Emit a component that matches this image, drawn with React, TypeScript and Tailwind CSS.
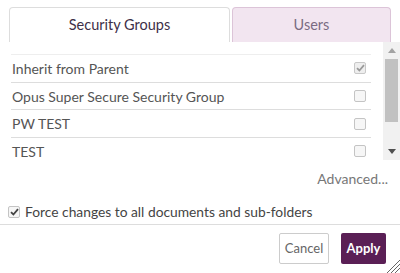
import React from "react";

const rows = [
  { label: "Inherit from Parent", checked: true, disabled: true },
  { label: "Opus Super Secure Security Group", checked: false },
  { label: "PW TEST", checked: false },
  { label: "TEST", checked: false },
];

function Box({ checked, disabled }: { checked?: boolean; disabled?: boolean }) {
  return (
    <span
      className={
        "w-[12px] h-[12px] rounded-[2px] border flex items-center justify-center " +
        (disabled ? "border-[#c8c8c8] bg-[#eeeeee]" : "border-[#c4c4c4] bg-[#f6f6f6]")
      }
    >
      {checked && (
        <svg width="9" height="8" viewBox="0 0 9 8">
          <path
            d="M1 4.2 L3.4 6.5 L8 1.2"
            fill="none"
            stroke={disabled ? "#9a9a9a" : "#444"}
            strokeWidth="1.8"
          />
        </svg>
      )}
    </span>
  );
}

export default function App() {
  return (
    <div
      className="w-[400px] h-[273px] bg-white relative overflow-hidden text-[14px]"
      style={{ fontFamily: "Lato, 'Open Sans', sans-serif" }}
    >
      <div className="flex pt-[7px] pl-[9px] h-[42px]">
        <div className="w-[221px] h-[35px] border border-b-0 border-[#dddddd] rounded-t-[4px] bg-white flex items-center justify-center text-[14.5px] text-[#3d2f48]">
          Security Groups
        </div>
        <div className="ml-[2px] w-[159px] h-[35px] border border-b-0 border-[#dcc4d8] rounded-t-[4px] bg-[#f2e5f0] flex items-center justify-center text-[14.5px] text-[#7a6b82]">
          Users
        </div>
      </div>
      <div className="flex h-[118px]">
        <div className="flex-1 pt-[12px] pl-[11px] pr-[12px] overflow-hidden">
          <div className="border-t border-[#eeeeee]">
            {rows.map((r) => (
              <div
                key={r.label}
                className="h-[27.7px] border-b border-[#dddddd] flex items-center justify-between pl-[1px] pr-[5px] text-[#555555]"
              >
                <span>{r.label}</span>
                <Box checked={r.checked} disabled={r.disabled} />
              </div>
            ))}
          </div>
        </div>
        <div className="w-[17px] bg-[#f1f1f1] flex flex-col items-center">
          <div className="h-[17px] flex items-center justify-center">
            <svg width="8" height="5" viewBox="0 0 8 5">
              <path d="M0 5 L4 0 L8 5 Z" fill="#a3a3a3" />
            </svg>
          </div>
          <div className="w-[13px] h-[63px] bg-[#c1c1c1]" />
          <div className="flex-1" />
          <div className="h-[17px] flex items-center justify-center">
            <svg width="8" height="5" viewBox="0 0 8 5">
              <path d="M0 0 L8 0 L4 5 Z" fill="#505050" />
            </svg>
          </div>
        </div>
      </div>
      <div className="flex justify-end pr-[12px] pt-[8px] h-[40px] text-[#777777]">Advanced...</div>
      <div className="flex items-center pl-[8px] h-[24px] text-[#444444] gap-[5px]">
        <Box checked />
        <span className="text-[13.8px]">Force changes to all documents and sub-folders</span>
      </div>
      <div className="border-t border-[#dddddd] flex justify-end gap-[12px] pt-[8px] pr-[14px]">
        <button className="w-[50px] h-[31px] border border-[#cccccc] rounded-[2px] bg-white text-[13px] text-[#666666]">
          Cancel
        </button>
        <button className="w-[45px] h-[31px] rounded-[2px] bg-[#5a1f55] text-[13px] text-white font-bold">
          Apply
        </button>
      </div>
      <svg className="absolute right-0 bottom-0" width="15" height="15" viewBox="0 0 15 15">
        <path d="M15 2 L2 15 M15 6 L6 15 M15 10 L10 15" stroke="#666" strokeWidth="1" />
      </svg>
    </div>
  );
}
